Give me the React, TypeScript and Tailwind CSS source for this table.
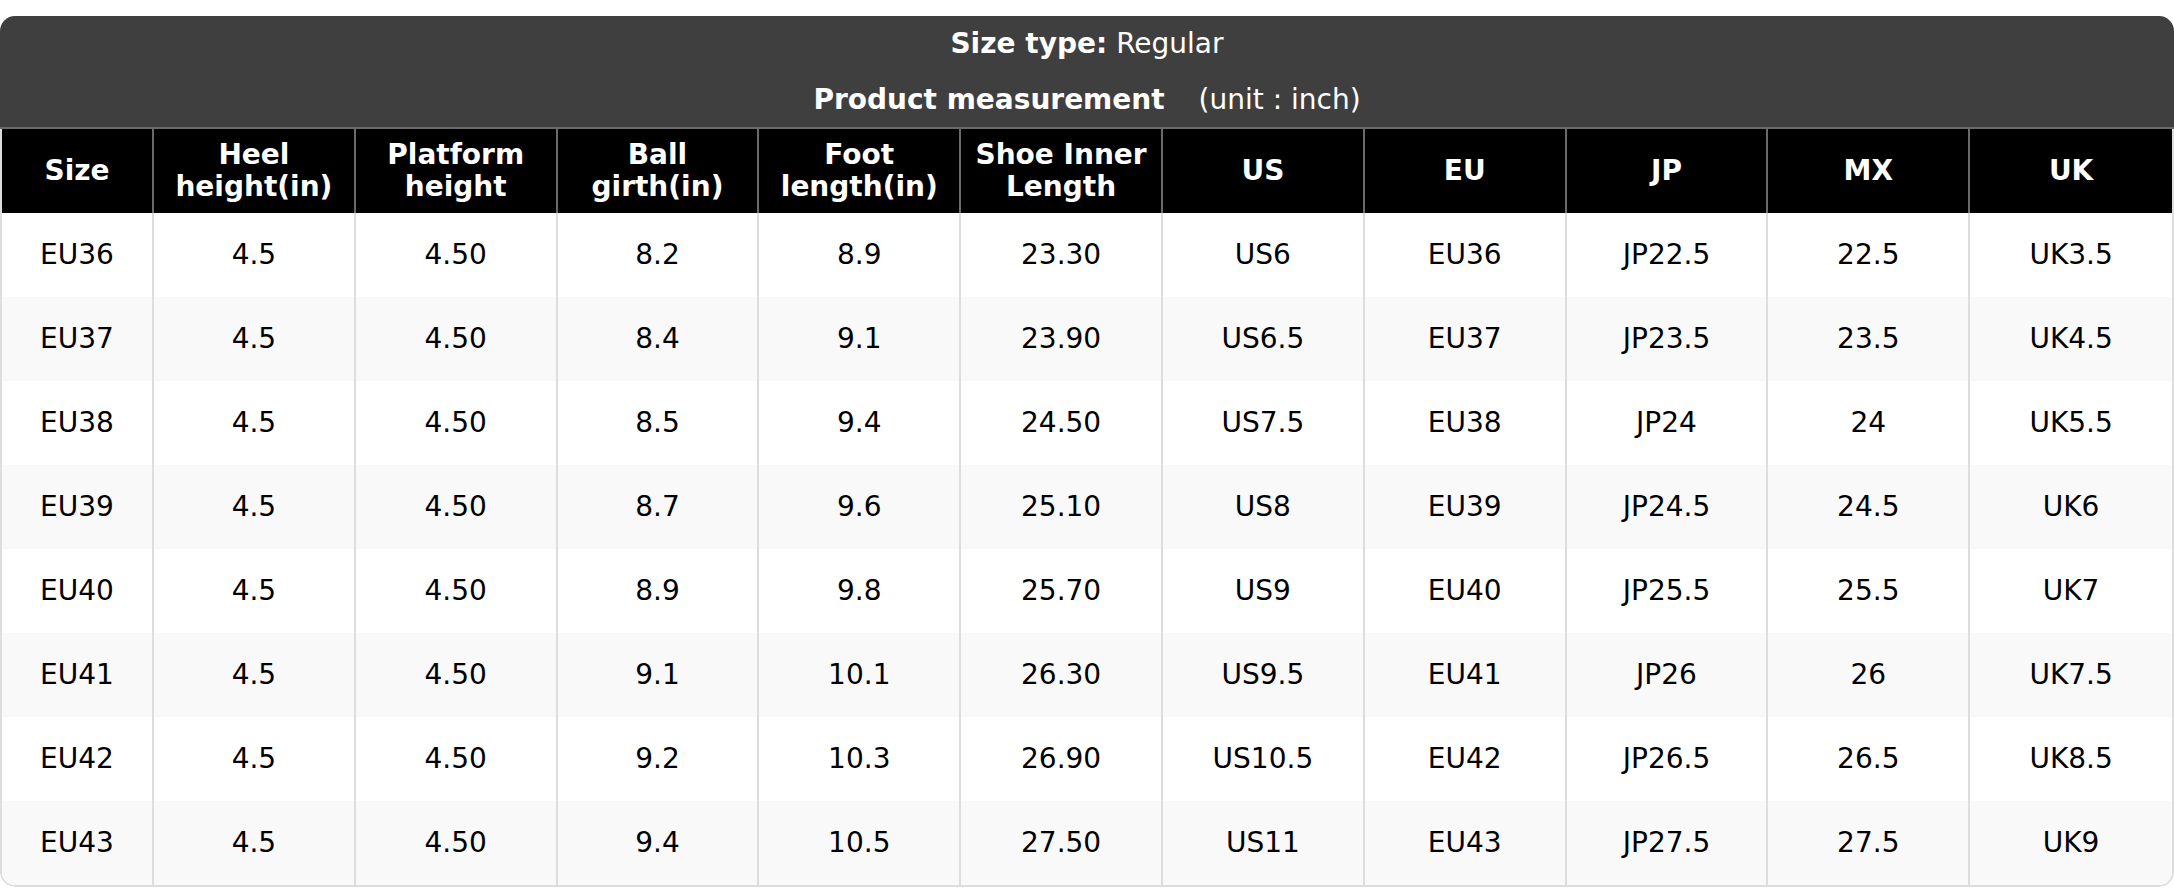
import React from "react";

const headers = [
  ["Size"],
  ["Heel", "height(in)"],
  ["Platform", "height"],
  ["Ball", "girth(in)"],
  ["Foot", "length(in)"],
  ["Shoe Inner", "Length"],
  ["US"],
  ["EU"],
  ["JP"],
  ["MX"],
  ["UK"],
];

const rows = [
  ["EU36", "4.5", "4.50", "8.2", "8.9", "23.30", "US6", "EU36", "JP22.5", "22.5", "UK3.5"],
  ["EU37", "4.5", "4.50", "8.4", "9.1", "23.90", "US6.5", "EU37", "JP23.5", "23.5", "UK4.5"],
  ["EU38", "4.5", "4.50", "8.5", "9.4", "24.50", "US7.5", "EU38", "JP24", "24", "UK5.5"],
  ["EU39", "4.5", "4.50", "8.7", "9.6", "25.10", "US8", "EU39", "JP24.5", "24.5", "UK6"],
  ["EU40", "4.5", "4.50", "8.9", "9.8", "25.70", "US9", "EU40", "JP25.5", "25.5", "UK7"],
  ["EU41", "4.5", "4.50", "9.1", "10.1", "26.30", "US9.5", "EU41", "JP26", "26", "UK7.5"],
  ["EU42", "4.5", "4.50", "9.2", "10.3", "26.90", "US10.5", "EU42", "JP26.5", "26.5", "UK8.5"],
  ["EU43", "4.5", "4.50", "9.4", "10.5", "27.50", "US11", "EU43", "JP27.5", "27.5", "UK9"],
];

const SizeChart = () => {
  return (
    <div className="pt-[16px] bg-white font-['DejaVu_Sans',sans-serif] text-[28px]">
      <div className="rounded-[15px] overflow-hidden">
        <div className="bg-[#3f3f3f] text-white">
          <div className="h-[56px] flex items-center justify-center">
            <span className="font-bold">Size type:</span>
            <span className="ml-[9px]">Regular</span>
          </div>
          <div className="h-[55px] flex items-center justify-center">
            <span className="font-bold">Product measurement</span>
            <span className="ml-[34px]">(unit : inch)</span>
          </div>
        </div>
        <div className="h-[2px] bg-[#6a6a6a]" />
        <div className="border-x-2 border-b-2 border-[#dddddd] rounded-b-[15px] overflow-hidden">
          <div className="grid grid-cols-[152px_repeat(10,1fr)] bg-black text-white font-bold leading-[32px]">
            {headers.map((h, i) => (
              <div
                key={i}
                className={`h-[84px] flex flex-col items-center justify-center text-center ${
                  i < headers.length - 1 ? "border-r-2 border-[#6a6a6a]" : ""
                }`}
              >
                {h.map((line) => (
                  <span key={line}>{line}</span>
                ))}
              </div>
            ))}
          </div>
          {rows.map((row, r) => (
            <div
              key={r}
              className={`grid grid-cols-[152px_repeat(10,1fr)] text-black ${
                r % 2 === 1 ? "bg-[#f9f9f9]" : "bg-white"
              }`}
            >
              {row.map((cell, i) => (
                <div
                  key={i}
                  className={`h-[84px] flex items-center justify-center ${
                    i < row.length - 1 ? "border-r-2 border-[#dddddd]" : ""
                  }`}
                >
                  {cell}
                </div>
              ))}
            </div>
          ))}
        </div>
      </div>
    </div>
  );
};

export default function App() {
  return <SizeChart />;
}
